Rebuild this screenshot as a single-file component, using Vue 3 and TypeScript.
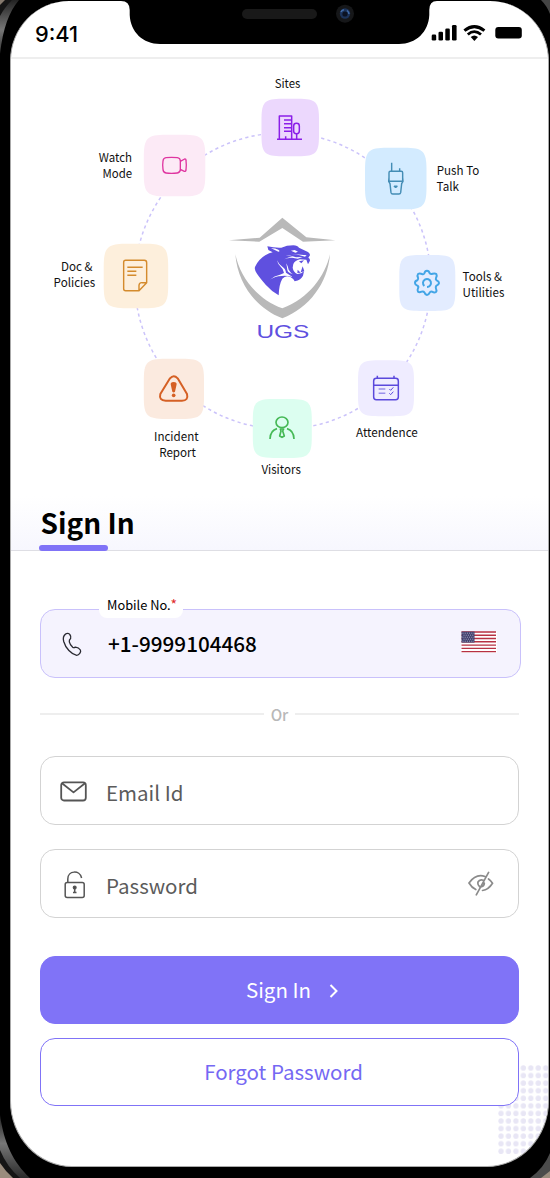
<script setup lang="ts">
interface Tile {
  id: string
  x: number
  y: number
  size: number
  fill: string
}

interface Label {
  text: string
  x: number
  y: number
  width: number
}

const tiles: Tile[] = [
  { id: 'sites', x: 261.5, y: 98.7, size: 57.5, fill: '#ecd8fd' },
  { id: 'watch', x: 143.8, y: 134.8, size: 61.5, fill: '#fceaf6' },
  { id: 'push', x: 365, y: 147.8, size: 61.5, fill: '#d3ebff' },
  { id: 'tools', x: 399.3, y: 255, size: 56, fill: '#e3ecff' },
  { id: 'attendance', x: 358, y: 360.2, size: 56, fill: '#efecff' },
  { id: 'visitors', x: 252.8, y: 399, size: 59, fill: '#dcfef0' },
  { id: 'incident', x: 143.8, y: 358.8, size: 60.2, fill: '#fbeadf' },
  { id: 'docs', x: 103.7, y: 243.8, size: 64.5, fill: '#fdefdc' },
]

const labels: Label[] = [
  { text: 'Sites', x: 274.7, y: 87.6, width: 25.6 },
  { text: 'Watch', x: 98.8, y: 162.2, width: 33.2 },
  { text: 'Mode', x: 102.6, y: 178, width: 29.6 },
  { text: 'Push To', x: 436.8, y: 175, width: 42.4 },
  { text: 'Talk', x: 436.6, y: 191, width: 22.4 },
  { text: 'Tools &', x: 462.6, y: 281.4, width: 39.4 },
  { text: 'Utilities', x: 462.6, y: 297.2, width: 41.8 },
  { text: 'Doc &', x: 61, y: 271.2, width: 31.4 },
  { text: 'Policies', x: 53.6, y: 287, width: 41.6 },
  { text: 'Incident', x: 154, y: 440.8, width: 44.6 },
  { text: 'Report', x: 159.2, y: 456.6, width: 36.8 },
  { text: 'Visitors', x: 261.4, y: 473.6, width: 39.4 },
  { text: 'Attendence', x: 356, y: 436.6, width: 61.8 },
]

function squircle({ x, y, size }: Tile): string {
  const e = size * 0.36
  const k = size * 0.055
  const r = x + size
  const b = y + size
  return [
    `M${x + e},${y}H${r - e}`,
    `C${r - k},${y} ${r},${y + k} ${r},${y + e}`,
    `V${b - e}`,
    `C${r},${b - k} ${r - k},${b} ${r - e},${b}`,
    `H${x + e}`,
    `C${x + k},${b} ${x},${b - k} ${x},${b - e}`,
    `V${y + e}`,
    `C${x},${y + k} ${x + k},${y} ${x + e},${y}Z`,
  ].join('')
}
</script>

<template>
  <main class="device">
    <svg class="casing" viewBox="0 0 550 1178" aria-hidden="true">
      <defs>
        <linearGradient id="edgeTop" x1="0" y1="0" x2="0" y2="1">
          <stop offset="0" stop-color="#222" />
          <stop offset="0.55" stop-color="#777" />
          <stop offset="1" stop-color="#333" />
        </linearGradient>
        <linearGradient id="edgeBottom" x1="0" y1="0" x2="0" y2="1">
          <stop offset="0" stop-color="#222" />
          <stop offset="0.45" stop-color="#777" />
          <stop offset="1" stop-color="#2a2a2a" />
        </linearGradient>
      </defs>
      <path d="M0,0H19C9,12 3,28 0,54Z" fill="url(#edgeTop)" />
      <path d="M0,0H12C7,5 3,10 0,16Z" fill="#151515" />
      <path d="M0,0H5L0,5Z" fill="#85796d" />
      <path d="M541,0H550V14Q547,6 541,0Z" fill="#444" />
      <path d="M0,1115C4,1143 13,1162 30,1178H0Z" fill="url(#edgeBottom)" />
      <path d="M0,1150Q7,1167 20,1178H0Z" fill="#151515" />
      <path d="M0,1163Q6,1172 13,1178H0Z" fill="#9a8c7d" />
      <path d="M550,1153Q544,1168 530,1178H550Z" fill="#4b4b4b" />
      <path d="M550,1171L541,1178H550Z" fill="#9a8c7d" />
    </svg>

    <div class="screen">
      <svg class="dots" width="50" height="90" aria-hidden="true">
        <defs>
          <pattern id="dot" width="7.45" height="7.57" patternUnits="userSpaceOnUse">
            <circle cx="3" cy="3" r="2.65" fill="#e8e6f5" />
          </pattern>
        </defs>
        <rect width="50" height="90" fill="url(#dot)" />
      </svg>

      <header class="status">
        <span class="time">9:41</span>
        <svg class="notch" width="316" height="45" viewBox="121 0 316 45" aria-hidden="true">
          <path d="M121,0V1Q129.7,1 129.7,10V15C130.5,32 143,44 160,44H399C416,44 428.5,32 429.3,15V10Q429.3,1 437,1V0Z" fill="#000" />
          <rect x="242" y="9" width="75" height="10" rx="5" fill="#191919" />
          <circle cx="345" cy="13.7" r="9" fill="#161719" />
          <circle cx="345" cy="13.5" r="5.2" fill="#1c3359" />
          <circle cx="345" cy="14" r="2.6" fill="#0b1222" />
          <path d="M341,12Q342,9.5 344,10M347,10.5Q349,12 349,14" fill="none" stroke="#416ba8" stroke-width="1.5" />
        </svg>
        <svg class="signals" width="92" height="20" viewBox="431 23 92 20" aria-hidden="true">
          <rect x="431.7" y="34.6" width="4.5" height="6" rx="1.3" />
          <rect x="438.5" y="31.8" width="4.5" height="8.8" rx="1.3" />
          <rect x="445.3" y="28.4" width="4.5" height="12.2" rx="1.3" />
          <rect x="452" y="25" width="4.6" height="15.6" rx="1.3" />
          <path d="M464.4,30.7Q474.3,22.5 484.4,30.7" fill="none" stroke="#000" stroke-width="3" />
          <path d="M467.8,34.5Q474.3,28.7 481,34.5" fill="none" stroke="#000" stroke-width="2.8" />
          <path d="M470.7,37.1Q474.3,34 478,37.1L474.4,41Z" />
          <rect x="495.3" y="27" width="26.5" height="11.6" rx="3" />
        </svg>
      </header>

      <section class="hero">
        <svg class="wheel" viewBox="11 59 537 492" role="img" aria-label="UGS modules">
          <circle class="orbit" cx="282.8" cy="281" r="148" />
          <path v-for="tile in tiles" :key="tile.id" :d="squircle(tile)" :fill="tile.fill" />
          <text
            v-for="label in labels"
            :key="label.text"
            class="label"
            :x="label.x"
            :y="label.y"
            :textLength="label.width"
            lengthAdjust="spacingAndGlyphs"
          >{{ label.text }}</text>

          <!-- Sites -->
          <g class="icon" transform="translate(90 70) scale(.33333)" stroke="#8b1fe8" stroke-width="4.5">
            <path d="M561,208H636M568,207V138H605V207M582,150H603M582,161H603M582,173H603M582,184H603M587,199V207M620,191V207" />
            <rect x="611" y="160" width="17" height="31" rx="8" />
          </g>
          <!-- Watch mode -->
          <g class="icon" transform="translate(90 70) scale(.33333)" stroke="#df35a0" stroke-width="4">
            <path d="M228,263Q244,261 262,263Q271,264 271,273V298Q271,308 262,309Q244,311 228,309Q219,308 219,298Q217,286 219,273Q220,264 228,263ZM271,274L284,267Q288,266 288,272Q290,286 288,300Q287,305 283,304L271,298Z" />
          </g>
          <!-- Push to talk -->
          <g class="icon" transform="translate(320 120) scale(.33333)" stroke="#448db5" stroke-width="4.3">
            <path d="M215,128V153M239,145V153M211,154H244Q248,154 248,158V184H207V158Q207,154 211,154ZM207,172L206,184L210,191L213,218Q214,222 218,222H237Q241,222 242,218L245,191L249,184L248,172M223,199H231L227,202Z" />
          </g>
          <!-- Tools -->
          <g class="icon" transform="translate(320 120) scale(.33333)" stroke="#43a5e6" stroke-width="6">
            <path d="M313,460Q315,452 321,452Q327,452 329,460Q333,464 338,461Q345,459 349,462Q352,467 348,474Q346,478 350,481Q357,484 357,489Q356,495 349,497Q346,501 348,506Q351,512 348,516Q343,519 336,515Q331,514 329,518Q326,525 321,525Q315,524 313,517Q310,513 305,515Q298,518 294,515Q291,511 294,505Q297,500 292,497Q285,494 285,489Q285,483 292,481Q296,478 294,473Q291,466 294,462Q299,459 306,462Q311,464 313,460Z" />
            <path d="M313,498A12,12 0 1 1 321,501" />
          </g>
          <!-- Attendance -->
          <g class="icon" transform="translate(240 340) scale(.33333)" stroke="#5b49dc" stroke-width="4.5">
            <rect x="401" y="115" width="74" height="64" rx="8" />
            <path d="M401,136H475M412,107V115M462,107V115" />
            <path d="M416,147H436M416,160H436" stroke="#9b90ec" />
            <path d="M448,147L452,151L460,142M448,160L452,164L460,155" stroke-width="3" />
          </g>
          <!-- Visitors -->
          <g class="icon" transform="translate(240 340) scale(.33333)" stroke="#45b955" stroke-width="5">
            <ellipse cx="126" cy="247" rx="18" ry="16" />
            <path d="M90,297Q91,271 111,266M162,297Q161,271 141,266M121,267H131L128,273L133,288L126,292L119,288L123,273Z" />
          </g>
          <!-- Incident -->
          <g class="icon" transform="translate(40 230) scale(.33333)" stroke="#d56025" stroke-width="6">
            <path d="M390,445Q401,432 413,445L441,492Q446,512 426,512H377Q356,511 361,492Z" />
            <path d="M401,456Q413,456 409,467L405,485Q401,490 397,485L393,467Q389,456 401,456Z" fill="#d56025" stroke="none" />
            <circle cx="401" cy="496" r="5.5" fill="#d56025" stroke="none" />
          </g>
          <!-- Documents -->
          <g class="icon" transform="translate(40 230) scale(.33333)" stroke="#d48b2d" stroke-width="4.3">
            <path d="M257,91H313Q320,91 320,98V158L297,182H257Q251,182 251,176V97Q251,91 257,91ZM297,181V166Q298,157 306,158H320M262,112H308M262,124H289M262,136H289" />
          </g>
          <!-- Shield and panther -->
          <g transform="translate(215 205) scale(.33333)">
            <path fill="#b9b9b9" d="M202,38L274,97L361,106L264,110L202,69L133,110L42,106L134,98ZM61,148C75,214 122,280 202,310C282,280 330,214 345,148C338,236 282,309 202,340C122,309 68,236 61,148Z" />
            <path fill="#5f50df" d="M157,124Q179,129 199,128Q215,121 235,121Q248,122 252,128L274,139Q285,143 285,151L280,158Q287,162 284,169L279,178L274,164L255,163Q240,167 235,177L233,188Q235,201 247,207Q260,207 267,199L264,212Q259,224 239,229Q235,220 225,215Q211,210 202,221Q192,238 191,271Q170,259 152,239Q134,218 126,206Q116,192 121,184Q132,162 151,151Q163,143 173,142L160,135Z" />
            <path fill="#fff" d="M168,130Q182,130 190,134Q197,139 190,140Q180,136 168,130ZM228,137L239,135L249,140L241,143ZM224,146Q249,148 275,151L270,155Q247,148 224,146ZM212,151Q228,151 243,157L263,156L248,161L231,158Q216,158 207,163Q220,155 233,155ZM186,166Q191,178 202,185Q212,191 213,203L233,216Q213,211 200,213Q180,214 165,224Q178,212 195,209L207,204Q206,192 197,185Q189,179 186,166ZM213,175Q220,184 221,194Q228,205 234,208Q219,204 217,195Q216,183 213,175Z" />
            <path fill="#5f50df" d="M252,169L267,166L259,175ZM248,194L257,203L247,204ZM263,184L268,199L257,202Z" />
          </g>
          <text class="brand" x="256.4" y="337.6" textLength="53" lengthAdjust="spacingAndGlyphs">UGS</text>
        </svg>
        <h1 class="title">Sign In</h1>
      </section>

      <form class="form" @submit.prevent>
        <label class="field field-active">
          <span class="legend">Mobile No.<em>*</em></span>
          <svg class="field-icon phone" width="28" height="28" viewBox="0 0 28 28" fill="none" stroke="#292931" stroke-width="1.3" stroke-linejoin="round">
            <path d="M5.5,3.1C7,2 9,2.1 9.8,3.5Q11.4,5.5 10.6,7.6Q9,9 9.3,10.8Q10,13.6 12.7,16.3Q13.8,17.2 15.5,16.1Q18.7,16.4 20.4,19C21.4,21.2 19,24.2 16.7,24.3C11.2,23.2 5.7,17.3 3.7,10.5Q2.4,5.3 5.5,3.1Z" />
          </svg>
          <span class="value">+1-9999104468</span>
          <svg class="flag" width="36" height="22" viewBox="0 0 36 22" aria-label="United States">
            <rect width="36" height="22" rx="1.5" fill="#fff" />
            <path d="M.5,1H35M.5,4.2H35M.5,7.5H35M.5,10.8H35M.5,14.1H35M.5,17.4H35M.5,20.6H35" stroke="#b73143" stroke-width="1.4" />
            <rect x=".5" y=".6" width="13" height="11" fill="#41416e" />
            <path d="M1.5,2.2H13M2.5,4.2H13M1.5,6.2H13M2.5,8.2H13M1.5,10.2H13" stroke="#b9b9d0" stroke-width=".9" stroke-dasharray="1 1.2" />
          </svg>
        </label>

        <div class="divider"><span>Or</span></div>

        <label class="field email">
          <svg class="field-icon envelope" width="28" height="28" viewBox="0 0 28 28" fill="none" stroke="#555" stroke-width="1.8" stroke-linejoin="round">
            <rect x="1.2" y="3.4" width="24.6" height="18.1" rx="2.8" />
            <path d="M2,4.2L13.5,13.4L25,4.2" />
          </svg>
          <span class="placeholder">Email Id</span>
        </label>

        <label class="field password">
          <svg class="field-icon" width="28" height="32" viewBox="0 0 28 32" fill="none" stroke="#555" stroke-width="1.5">
            <rect x="5.2" y="14.6" width="19" height="15" rx="2" />
            <path d="M7.8,14V11C7.8,2.2 19.8,1.8 21.6,10" />
            <path d="M14.7,20V25M13,24.5H16.5" />
            <circle cx="14.7" cy="19.6" r="1.3" fill="#444" />
          </svg>
          <span class="placeholder">Password</span>
          <svg class="eye" width="26" height="26" viewBox="0 0 26 26" fill="none" stroke="#8b8b8b" stroke-width="1.7" stroke-linecap="round">
            <path d="M17,5.5Q8,2.3 1,12Q3.5,16.4 7.8,18.5M20.5,8Q23,9.8 24.5,12.3Q20.5,18.8 14.5,19.5M20.6,1.4L8.3,23.8M15.3,9.2Q11.6,7.9 10,11Q9.4,13.8 11.5,15.5M16.3,12Q16.4,15 13.5,15.8" />
          </svg>
        </label>

        <button class="button primary" type="submit">
          <span>Sign In</span>
          <svg width="10" height="14" viewBox="0 0 10 14" fill="none" stroke="#fff" stroke-width="2">
            <path d="M1.5,1L7.5,7L1.5,13" />
          </svg>
        </button>
        <button class="button secondary" type="button"><span>Forgot Password</span></button>
      </form>
    </div>
  </main>
</template>

<style>
body {
  margin: 0;
}
</style>

<style scoped>
.device {
  position: relative;
  box-sizing: border-box;
  width: 550px;
  height: 1178px;
  padding: 1px 0 0 10px;
  overflow: hidden;
  background: #000;
  font-family: "Noto Sans CJK SC", "Noto Sans", sans-serif;
}
.casing {
  position: absolute;
  inset: 0;
}
.screen {
  position: relative;
  box-sizing: border-box;
  width: 539px;
  height: 1166px;
  border: 1px solid #aaa;
  border-top: 0;
  border-radius: 59px 59px 62px 62px / 60px 60px 66px 66px;
  overflow: hidden;
  background: #fff;
}
.dots {
  position: absolute;
  left: 487px;
  top: 1063.5px;
}
.status {
  position: relative;
  box-sizing: border-box;
  display: flex;
  align-items: flex-start;
  height: 58px;
  border-bottom: 2px solid #eee;
}
.time {
  width: 110px;
  box-sizing: border-box;
  padding: 19px 0 0 24px;
  font: 500 21.8px/28px Inter, sans-serif;
}
.notch {
  flex: none;
  margin-top: -1px;
}
.signals {
  flex: none;
  margin: 22px 0 0 -6px;
}
.hero {
  position: relative;
  box-sizing: border-box;
  height: 492px;
  border-bottom: 1px solid #dedee4;
  background: linear-gradient(#fff 89%, #f7f7fe);
}
.wheel {
  display: block;
  width: 537px;
  height: 492px;
}
.orbit {
  fill: none;
  stroke: #cbc3fa;
  stroke-width: 1.5;
  stroke-dasharray: 3.2 3.2;
}
.label {
  font-size: 12.2px;
  fill: #111;
}
.brand {
  font-family: "Liberation Sans", sans-serif;
  font-size: 18.5px;
  fill: #5f50df;
}
.icon {
  fill: none;
  stroke-linejoin: round;
}
.title {
  position: absolute;
  left: 28px;
  bottom: -1px;
  width: 69px;
  margin: 0;
  padding: 0 0 11px 1.5px;
  box-sizing: border-box;
  white-space: nowrap;
  font-size: 28px;
  line-height: 36px;
  font-weight: 700;
}
.title::after {
  content: "";
  position: absolute;
  left: 0;
  bottom: 0;
  width: 69px;
  height: 6px;
  border-radius: 3px;
  background: #8073f7;
}
.form {
  position: relative;
  display: flex;
  flex-direction: column;
  width: 479px;
  padding: 58px 0 0 29px;
}
.field {
  position: relative;
  box-sizing: border-box;
  display: flex;
  align-items: center;
  height: 69px;
  padding: 0 24px 0 19px;
  border: 1.5px solid #d3d3d3;
  border-radius: 15px;
  background: #fff;
}
.field-active {
  width: 481px;
  border-color: #c9c1fb;
  background: #f5f3fe;
}
.legend {
  position: absolute;
  left: 58px;
  top: -18px;
  box-sizing: border-box;
  width: 84px;
  height: 26px;
  padding-left: 8px;
  border-radius: 8px;
  background: #fff;
  font-size: 12.8px;
  line-height: 25px;
  white-space: nowrap;
}
.legend em {
  font-style: normal;
  font-size: 14px;
  line-height: 1;
  color: #e02b2b;
}
.field-icon {
  flex: none;
  width: 28px;
}
.phone {
  margin-top: 3px;
}
.envelope {
  margin-top: 4px;
}
.value,
.placeholder {
  margin-left: 18px;
  flex: 1;
  font-size: 20.5px;
  line-height: 30px;
}
.value {
  margin-top: -2px;
  margin-left: 20px;
  font-size: 20.7px;
  font-weight: 500;
}
.placeholder {
  padding-top: 3px;
  color: #5b5b5b;
}
.flag {
  margin: -3px -1px 0 0;
}
.divider {
  display: flex;
  align-items: center;
  gap: 7px;
  height: 24px;
  margin: 24px 0 30px;
  color: #b8b8b8;
  font-size: 15.2px;
  font-weight: 500;
}
.divider::before,
.divider::after {
  content: "";
  flex: 1;
  height: 2px;
  background: #eee;
}
.password {
  margin-top: 24px;
}
.eye {
  margin-top: 1px;
}
.button {
  box-sizing: border-box;
  display: flex;
  align-items: center;
  justify-content: center;
  height: 68px;
  padding: 0;
  border: 1.5px solid #8073f7;
  border-radius: 15px;
  font-family: inherit;
  font-size: 20.5px;
  line-height: 30px;
}
.button span {
  margin-top: -2px;
}
.primary {
  gap: 18px;
  margin-top: 38px;
  padding-left: 26px;
  background: #8073f7;
  color: #fff;
}
.primary svg {
  margin-top: 2px;
}
.secondary {
  margin-top: 14px;
  padding-left: 8px;
  background: #fff;
  color: #7568f3;
}
</style>
